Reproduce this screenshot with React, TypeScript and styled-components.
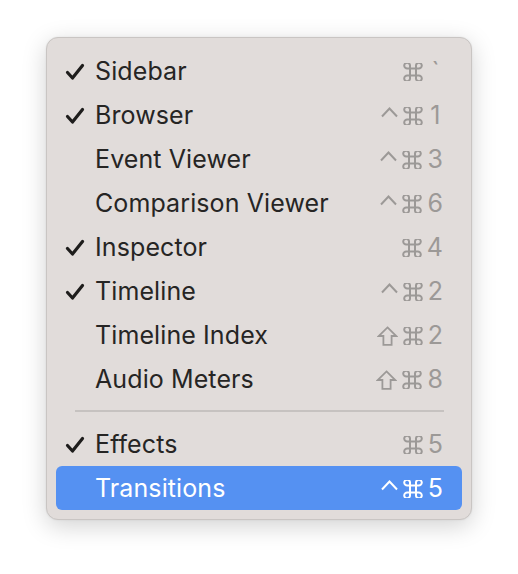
import React from "react";
import styled, { createGlobalStyle } from "styled-components";

const Global = createGlobalStyle`
  html, body { margin: 0; padding: 0; background: #ffffff; }
  body { font-family: "Inter", "Liberation Sans", sans-serif; -webkit-font-smoothing: antialiased; }
`;

const Page = styled.div`
  width: 518px;
  height: 574px;
  padding: 37px 0 0 46px;
  box-sizing: border-box;
`;

const Panel = styled.div`
  width: 426px;
  height: 483px;
  box-sizing: border-box;
  padding: 11px 9px 9px;
  background: #e1dcda;
  border: 1px solid #c9c5c3;
  border-radius: 12px;
  box-shadow: 0 6px 24px rgba(0, 0, 0, 0.18), 0 0 2px rgba(0, 0, 0, 0.08);
  display: flex;
  flex-direction: column;
`;

const Row = styled.div<{ $active?: boolean }>`
  height: 44px;
  box-sizing: border-box;
  padding: 1px 19px 0 9px;
  display: grid;
  grid-template-columns: 30px 1fr auto;
  align-items: center;
  border-radius: 6px;
  background: ${(p) => (p.$active ? "#5591f2" : "transparent")};
  color: ${(p) => (p.$active ? "#ffffff" : "#262524")};
  font-size: 25px;
  letter-spacing: 0.1px;
`;

const Check = styled.span`
  display: flex;
  align-items: center;
`;

const Label = styled.span`
  line-height: 1;
`;

const Shortcut = styled.span<{ $active?: boolean }>`
  display: flex;
  align-items: center;
  gap: 5px;
  color: ${(p) => (p.$active ? "#ffffff" : "#9c9997")};
  font-size: 25px;
  line-height: 1;
`;

const Glyph = styled.span`
  display: inline-flex;
  align-items: center;
  justify-content: center;
  height: 25px;
`;

const Char = styled.span`
  display: inline-flex;
  justify-content: center;
  min-width: 15px;
`;

const Separator = styled.div`
  height: 21px;
  box-sizing: border-box;
  padding: 9px 18px 0 19px;
  display: flex;
  align-items: flex-start;
  &::after {
    content: "";
    flex: 1;
    height: 2px;
    background: #c6c2c0;
  }
`;

const CheckIcon = () => (
  <svg width="20" height="18" viewBox="0 0 20 18">
    <path d="M2.5 9.5 L7.5 15 L17.5 2.5" fill="none" stroke="#1e1d1c" strokeWidth="3.2" strokeLinecap="round" strokeLinejoin="round" />
  </svg>
);

const CommandIcon = () => (
  <svg width="20" height="18" viewBox="0 0 20 18" style={{ marginTop: 1 }}>
    <path
      d="M7 5.5 V12.5 M13 5.5 V12.5 M7 5.5 H13 M7 12.5 H13 M7 5.5 H4.5 A2.9 2.9 0 1 1 7 3 Z M13 5.5 V3 A2.9 2.9 0 1 1 15.5 5.5 Z M13 12.5 H15.5 A2.9 2.9 0 1 1 13 15 Z M7 12.5 V15 A2.9 2.9 0 1 1 4.5 12.5 Z"
      fill="none"
      stroke="currentColor"
      strokeWidth="2"
      strokeLinejoin="round"
    />
  </svg>
);

const ControlIcon = () => (
  <svg width="17" height="18" viewBox="0 0 17 18">
    <path d="M1 9.5 L8.5 1.5 L16 9.5" fill="none" stroke="currentColor" strokeWidth="2" strokeLinejoin="miter" />
  </svg>
);

const ShiftIcon = () => (
  <svg width="21" height="20" viewBox="0 0 21 20" style={{ marginTop: 1 }}>
    <path
      d="M10.5 1.4 L19.3 10 H14.6 V18.8 H6.4 V10 H1.7 Z"
      fill="none"
      stroke="currentColor"
      strokeWidth="1.8"
      strokeLinejoin="miter"
    />
  </svg>
);

type Key = "cmd" | "ctrl" | "shift" | string;
type Item = { label: string; checked?: boolean; keys: Key[] };

const top: Item[] = [
  { label: "Sidebar", checked: true, keys: ["cmd", "`"] },
  { label: "Browser", checked: true, keys: ["ctrl", "cmd", "1"] },
  { label: "Event Viewer", keys: ["ctrl", "cmd", "3"] },
  { label: "Comparison Viewer", keys: ["ctrl", "cmd", "6"] },
  { label: "Inspector", checked: true, keys: ["cmd", "4"] },
  { label: "Timeline", checked: true, keys: ["ctrl", "cmd", "2"] },
  { label: "Timeline Index", keys: ["shift", "cmd", "2"] },
  { label: "Audio Meters", keys: ["shift", "cmd", "8"] },
];

const bottom: Item[] = [
  { label: "Effects", checked: true, keys: ["cmd", "5"] },
  { label: "Transitions", keys: ["ctrl", "cmd", "5"] },
];

const renderKey = (k: Key, i: number) => {
  if (k === "cmd") return <Glyph key={i}><CommandIcon /></Glyph>;
  if (k === "ctrl") return <Glyph key={i}><ControlIcon /></Glyph>;
  if (k === "shift") return <Glyph key={i}><ShiftIcon /></Glyph>;
  return <Char key={i}>{k}</Char>;
};

const MenuRow = ({ item, active }: { item: Item; active?: boolean }) => (
  <Row $active={active}>
    <Check>{item.checked ? <CheckIcon /> : null}</Check>
    <Label>{item.label}</Label>
    <Shortcut $active={active}>{item.keys.map(renderKey)}</Shortcut>
  </Row>
);

export default function App() {
  return (
    <Page>
      <Global />
      <Panel>
        {top.map((it) => (
          <MenuRow key={it.label} item={it} />
        ))}
        <Separator />
        <MenuRow item={bottom[0]} />
        <MenuRow item={bottom[1]} active />
      </Panel>
    </Page>
  );
}
